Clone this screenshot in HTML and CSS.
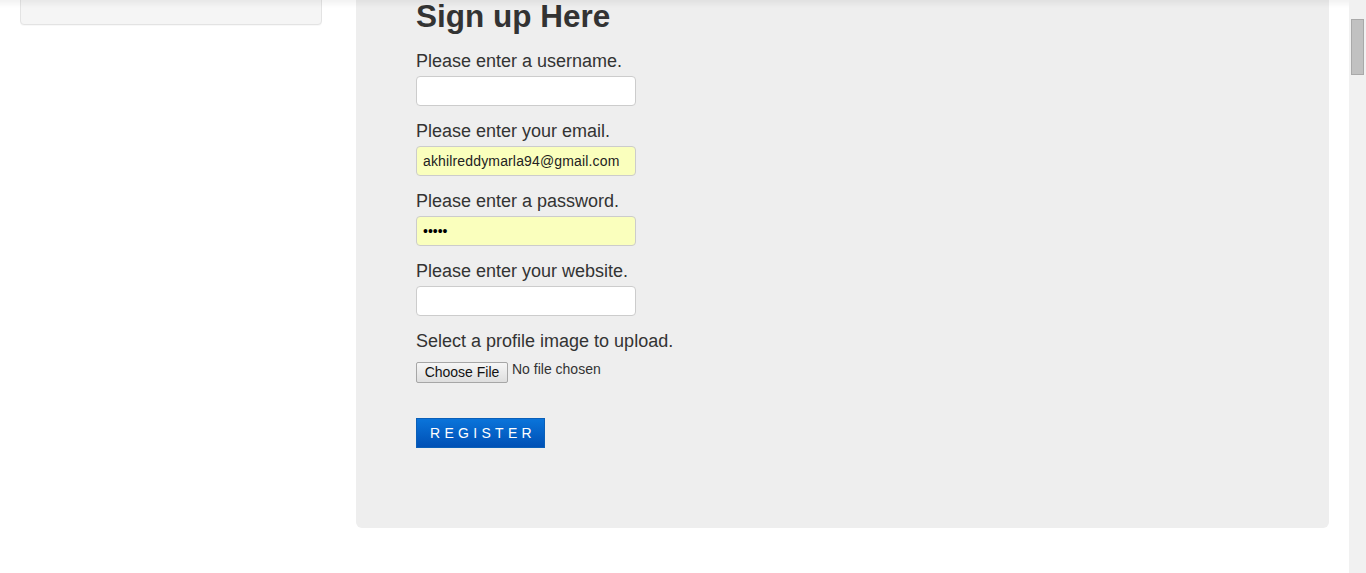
FILE: index.html
```html
<!DOCTYPE html>
<html>
<head>
<meta charset="utf-8">
<title>Sign up</title>
<link rel="stylesheet" href="styles.css">
</head>
<body>
<div class="viewport">
  <div class="page">
    <aside class="sidebar"></aside>
    <main class="panel">
      <h1 class="title">Sign up Here</h1>
      <form class="form">
        <div class="field">
          <label class="label">Please enter a username.</label>
          <div class="input"></div>
        </div>
        <div class="field">
          <label class="label">Please enter your email.</label>
          <div class="input autofill email">akhilreddymarla94@gmail.com</div>
        </div>
        <div class="field">
          <label class="label">Please enter a password.</label>
          <div class="input autofill dots">&bull;&bull;&bull;&bull;&bull;</div>
        </div>
        <div class="field">
          <label class="label">Please enter your website.</label>
          <div class="input"></div>
        </div>
        <div class="field file-field">
          <label class="label">Select a profile image to upload.</label>
          <div class="file">
            <span class="file-btn">Choose File</span>
            <span class="file-name">No file chosen</span>
          </div>
        </div>
        <div class="register">REGISTER</div>
      </form>
    </main>
  </div>
  <div class="scrollbar"><div class="thumb"></div></div>
</div>
<div class="top-shade"></div>
</body>
</html>
```
FILE: styles.css
```css
html, body {
  margin: 0;
  padding: 0;
  background: #fff;
  font-family: "Liberation Sans", Arial, sans-serif;
  color: #333;
  overflow: hidden;
}
.viewport {
  display: flex;
  width: 1366px;
  height: 573px;
}
.page {
  flex: 1;
  display: flex;
  align-items: flex-start;
  gap: 34px;
  padding: 0 20px;
}
.sidebar {
  width: 300px;
  height: 59px;
  margin-top: -36px;
  background: #f5f5f5;
  border: 1px solid #e3e3e3;
  border-radius: 4px;
  box-shadow: 0 1px 1px rgba(0,0,0,0.03);
}
.panel {
  width: 913px;
  margin-top: -20px;
  padding: 20px 0 80px 60px;
  background: #eeeeee;
  border-radius: 6px;
}
.title {
  margin: 0;
  font-size: 31.5px;
  line-height: 33px;
  font-weight: bold;
  color: #333;
}
.form {
  display: flex;
  flex-direction: column;
  margin-top: 18px;
}
.field {
  display: flex;
  flex-direction: column;
  gap: 5px;
  margin-bottom: 15px;
}
.label {
  display: block;
  font-size: 18px;
  line-height: 20px;
}
.input {
  box-sizing: border-box;
  width: 220px;
  height: 30px;
  border: 1px solid #cccccc;
  border-radius: 4px;
  background: #fff;
  padding: 0 6px;
  font-size: 14px;
  line-height: 28px;
  color: #222;
}
.autofill {
  background: #faffbd;
}
.email {
  letter-spacing: 0.15px;
}
.dots {
  font-size: 14px;
  color: #000;
}
.file-field {
  gap: 11px;
  margin-bottom: 0;
}
.file {
  display: flex;
  align-items: flex-start;
  gap: 4px;
}
.file-btn {
  box-sizing: border-box;
  width: 92px;
  height: 21px;
  border: 1px solid #a6a6a6;
  border-radius: 2px;
  background: linear-gradient(#f6f6f6, #dedede);
  font-size: 14px;
  line-height: 19px;
  text-align: center;
  color: #111;
}
.file-name {
  font-size: 14px;
  line-height: 14px;
  color: #333;
}
.register {
  align-self: flex-start;
  box-sizing: border-box;
  width: 129px;
  height: 30px;
  margin-top: 35px;
  padding-left: 13px;
  background: linear-gradient(#0a74da, #0050b5);
  border: 1px solid #0a5fb8;
  color: #fff;
  font-size: 14px;
  line-height: 28px;
  letter-spacing: 4.3px;
}
.scrollbar {
  width: 17px;
  height: 573px;
  background: #f1f1f1;
  display: flex;
  justify-content: center;
}
.thumb {
  box-sizing: border-box;
  width: 13px;
  height: 56px;
  margin-top: 19px;
  background: #c1c1c1;
  border: 1px solid #a9a9a9;
}
.top-shade {
  position: fixed;
  top: 0;
  left: 0;
  width: 1349px;
  height: 8px;
  background: linear-gradient(rgba(0,0,0,0.05), rgba(0,0,0,0));
  pointer-events: none;
}
```
